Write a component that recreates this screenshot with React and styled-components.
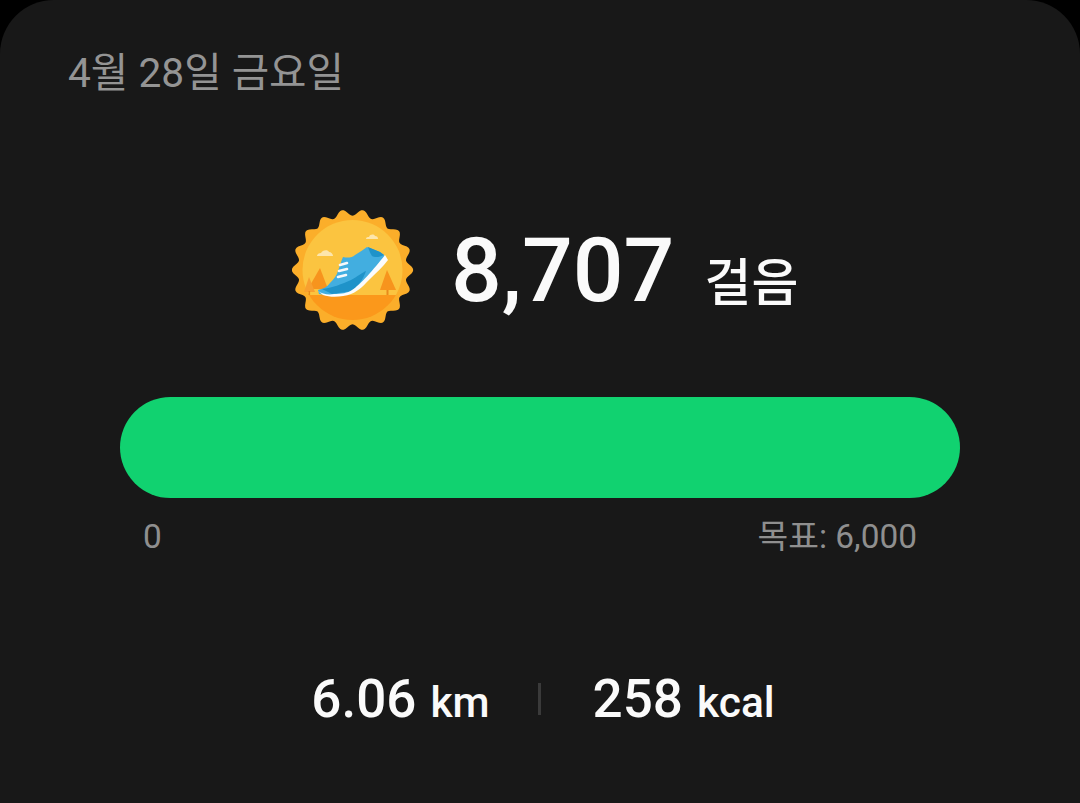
import React from "react";
import styled, { createGlobalStyle } from "styled-components";

const GlobalStyle = createGlobalStyle`
  html, body {
    margin: 0;
    padding: 0;
    background: #000;
  }
`;

// scalloped outline of the badge
function scallopPath(cx, cy, r, amp, count) {
  const pts = [];
  const steps = count * 12;
  for (let i = 0; i < steps; i++) {
    const a = (i / steps) * Math.PI * 2;
    const rr = r - amp * Math.cos(a * count);
    pts.push(`${(cx + rr * Math.sin(a)).toFixed(2)} ${(cy - rr * Math.cos(a)).toFixed(2)}`);
  }
  return `M${pts.join("L")}Z`;
}

function Badge() {
  return (
    <svg width="122" height="122" viewBox="0 0 122 122" style={{ flexShrink: 0 }}>
      <defs>
        <clipPath id="inner">
          <circle cx="60.5" cy="60" r="50" />
        </clipPath>
      </defs>
      <path d={scallopPath(60.5, 60, 57.5, 3.2, 18)} fill="#fbae2a" />
      <g clipPath="url(#inner)">
        <rect x="0" y="0" width="122" height="85" fill="#fbc440" />
        <rect x="0" y="85" width="122" height="37" fill="#fb981b" />
      </g>
      {/* clouds */}
      <path d="M25 46c0-2 2-3 4-3 1-3 7-4 8-1 2 0 4 2 4 4z" fill="#fde6ac" />
      <path d="M74 29c0-2 2-2 3-2 1-3 5-3 6-1 2 0 3 1 3 3z" fill="#fde6ac" />
      {/* trees */}
      <path d="M16 79l12-21 8 21z" fill="#f7941d" />
      <path d="M12 82l5-15 6 15z" fill="#f8a030" />
      <path d="M88 80l7-20 9 20z" fill="#f7941d" />
      <rect x="94.5" y="80" width="2" height="5" fill="#e98a1a" />
      <rect x="16.5" y="81" width="1.6" height="4" fill="#e98a1a" />
      {/* shoe */}
      <path d="M26 80c5-1 9-3 12-7 4-4 7-8 8-12 2-5 3-10 5-14 4 1 9 1 12-2 5-3 9-6 12-8l13 5 4 3 2 5-14 15-20 17-18 4-15-2z" fill="#42aee0" />
      <path d="M30 79c10-1 20-5 29-9 6-3 12-8 15-9-3 9-8 15-14 20l-20 3z" fill="#1f93c9" />
      <path d="M76 37l12 5 4 3c-4 2-9 3-12 1-2-3-3-6-4-9z" fill="#1f93c9" />
      <path d="M26 81c4 3 10 4 16 3 7 0 14-1 18-4 8-5 22-21 33-35l3 5c-5 7-12 13-17 18-6 6-12 13-20 16-8 3-20 4-28 1l-5-4z" fill="#fbfcfd" />
      <path d="M48 55l7-2M47 61l8-2M46 67l8-2" stroke="#f6f8fa" strokeWidth="2.6" strokeLinecap="round" fill="none" />
    </svg>
  );
}

function App() {
  return (
    <Card>
      <GlobalStyle />
      <DateLabel>4월 28일 금요일</DateLabel>
      <StepsRow>
        <Badge />
        <StepCount>8,707</StepCount>
        <StepUnit>걸음</StepUnit>
      </StepsRow>
      <Progress />
      <ScaleRow>
        <span>0</span>
        <span>목표: 6,000</span>
      </ScaleRow>
      <StatsRow>
        <Stat>
          <StatValue>6.06</StatValue>
          <StatUnit>km</StatUnit>
        </Stat>
        <Divider />
        <Stat>
          <StatValue>258</StatValue>
          <StatUnit>kcal</StatUnit>
        </Stat>
      </StatsRow>
    </Card>
  );
}

export default App;

const fontStack = `Roboto, "Noto Sans CJK KR", sans-serif`;

const Card = styled.div`
  box-sizing: border-box;
  width: 1080px;
  height: 803px;
  overflow: hidden;
  padding: 47px 120px 0;
  background: #181818;
  border-radius: 54px 54px 0 0;
  font-family: ${fontStack};
`;

const DateLabel = styled.div`
  margin-left: -52px;
  height: 52px;
  line-height: 52px;
  font-size: 40.7px;
  color: #949494;
`;

const StepsRow = styled.div`
  display: flex;
  align-items: center;
  justify-content: flex-start;
  height: 122px;
  margin-top: 111px;
  padding-left: 172px;
`;

const StepCount = styled.div`
  margin-left: 37px;
  font-size: 89.5px;
  font-weight: 500;
  line-height: 1;
  color: #fafafa;
`;

const StepUnit = styled.div`
  margin-left: 30px;
  margin-top: 24px;
  font-size: 51px;
  font-weight: 500;
  line-height: 1;
  color: #fafafa;
`;

const Progress = styled.div`
  height: 101px;
  margin-top: 65px;
  border-radius: 51px;
  background: #11d270;
`;

const ScaleRow = styled.div`
  display: flex;
  justify-content: space-between;
  margin-top: 18px;
  padding: 0 43px 0 23px;
  height: 42px;
  line-height: 42px;
  font-size: 33.4px;
  color: #8f8f8f;
`;

const StatsRow = styled.div`
  display: flex;
  align-items: center;
  justify-content: center;
  margin-top: 106px;
  padding-left: 6px;
  height: 70px;
`;

const Stat = styled.div`
  display: flex;
  align-items: baseline;
  gap: 14px;
  color: #fafafa;
  font-weight: 500;
`;

const StatValue = styled.span`
  font-size: 53px;
`;

const StatUnit = styled.span`
  font-size: 42.5px;
`;

const Divider = styled.div`
  width: 3px;
  height: 32px;
  margin: 0 52px 0 48px;
  background: #3a3a3a;
`;
